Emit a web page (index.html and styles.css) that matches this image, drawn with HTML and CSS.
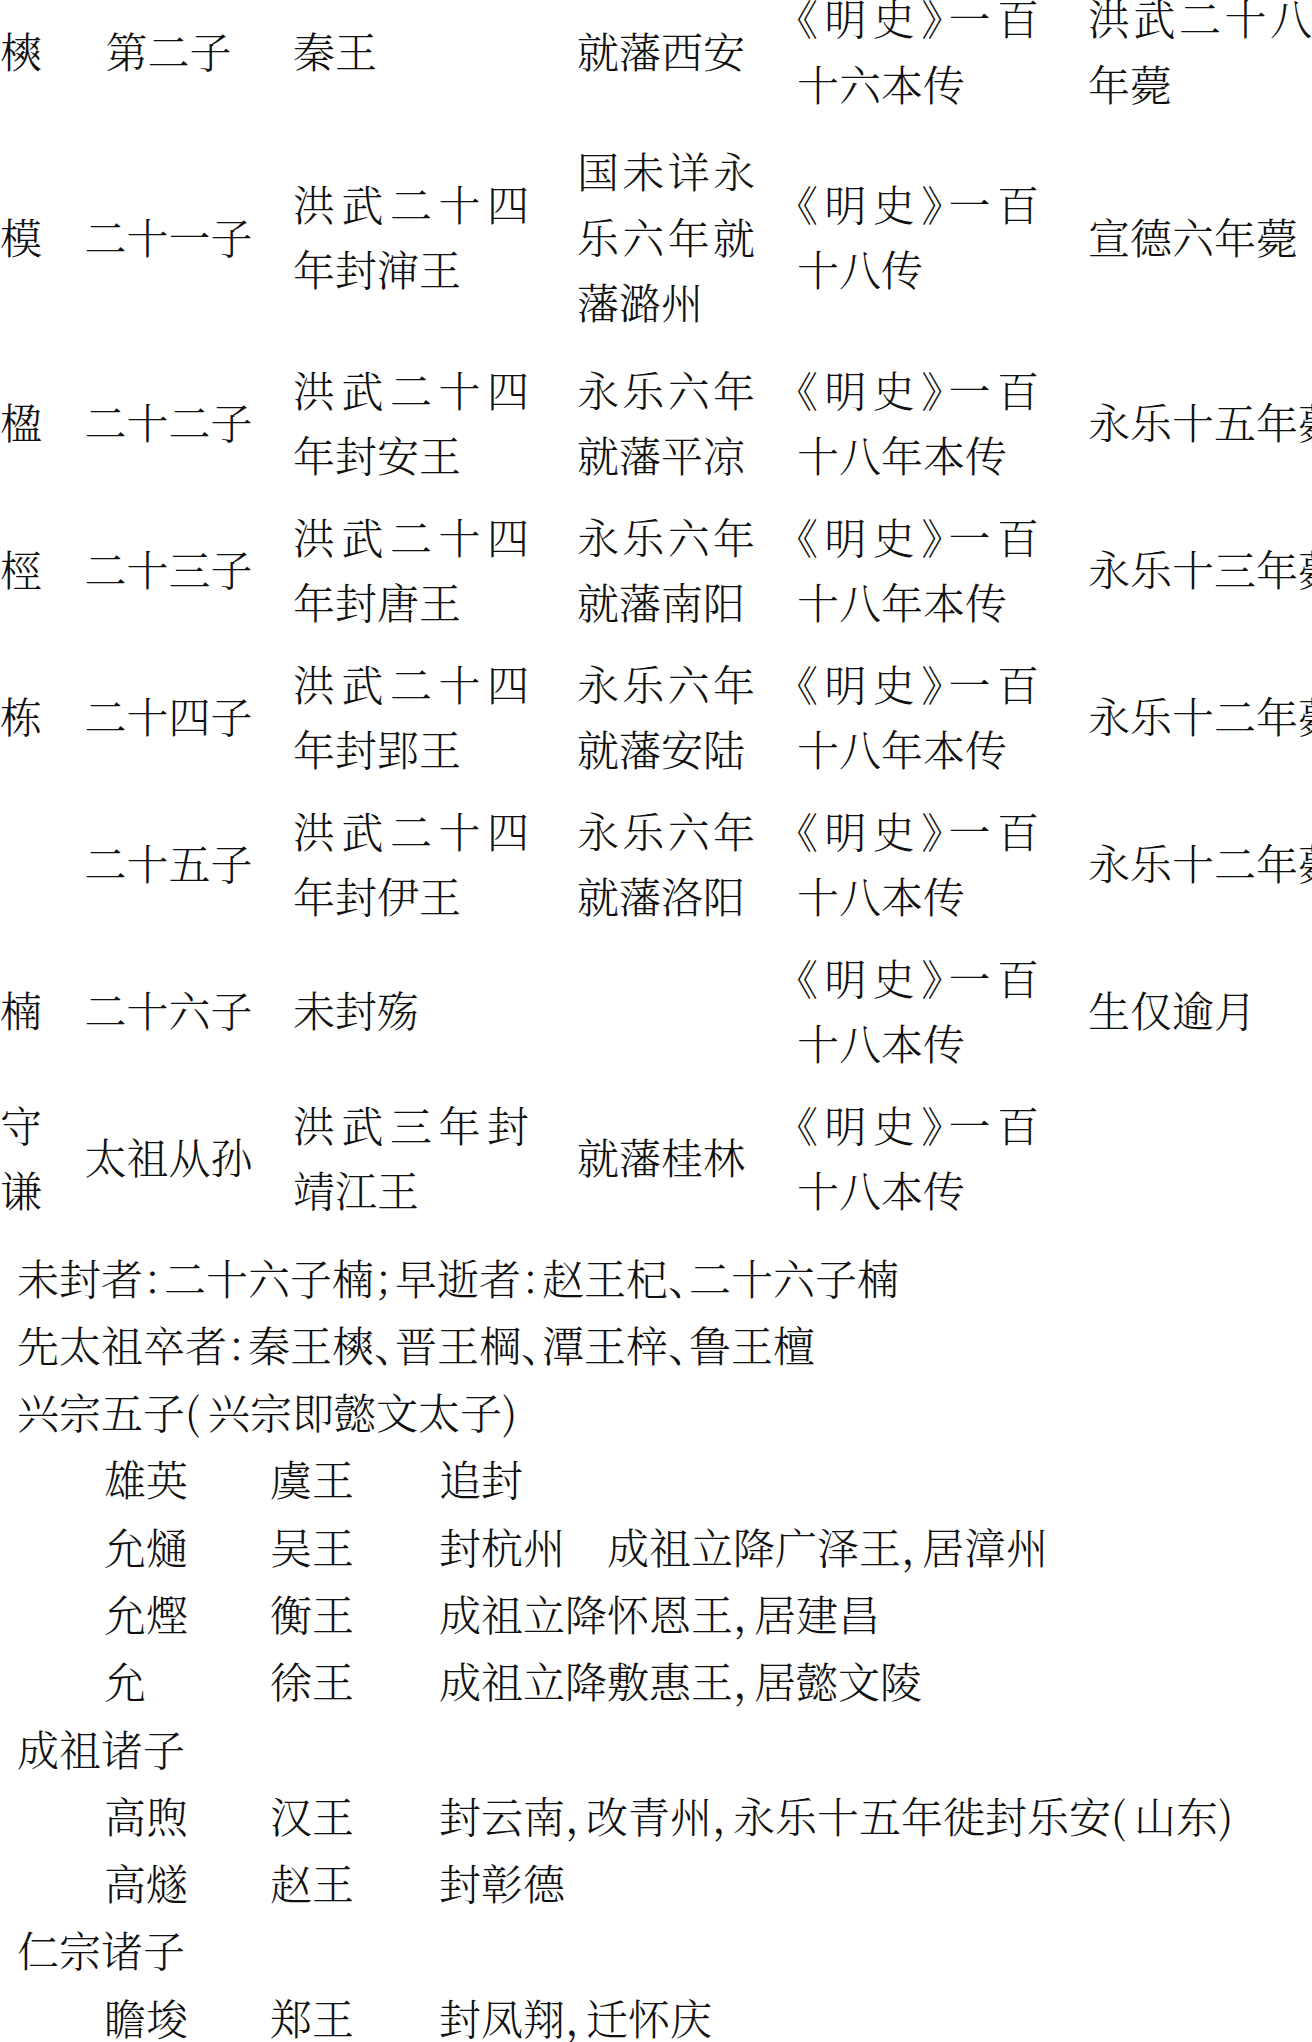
FILE: index.html
```html
<!DOCTYPE html>
<html lang="zh-CN">
<head>
<meta charset="utf-8">
<title>明代诸王表</title>
<link rel="stylesheet" href="styles.css">
</head>
<body>
<main class="page">
  <table class="roster">
    <colgroup>
      <col class="c-name"><col class="c-order"><col class="c-title"><col class="c-fief"><col class="c-src"><col class="c-death">
    </colgroup>
    <tbody>
      <tr>
        <td class="name">樉</td>
        <td class="order">第二子</td>
        <td class="title">秦王</td>
        <td class="fief">就藩西安</td>
        <td class="src"><div class="ln j">《明史》一百</div><div class="ln">十六本传</div></td>
        <td class="death"><div class="ln j">洪武二十八</div><div class="ln">年薨</div></td>
      </tr>
      <tr class="r3">
        <td class="name">模</td>
        <td class="order">二十一子</td>
        <td class="title"><div class="ln j">洪武二十四</div><div class="ln">年封渖王</div></td>
        <td class="fief"><div class="ln j">国未详永</div><div class="ln j">乐六年就</div><div class="ln">藩潞州</div></td>
        <td class="src"><div class="ln j">《明史》一百</div><div class="ln">十八传</div></td>
        <td class="death">宣德六年薨</td>
      </tr>
      <tr>
        <td class="name">楹</td>
        <td class="order">二十二子</td>
        <td class="title"><div class="ln j">洪武二十四</div><div class="ln">年封安王</div></td>
        <td class="fief"><div class="ln j">永乐六年</div><div class="ln">就藩平凉</div></td>
        <td class="src"><div class="ln j">《明史》一百</div><div class="ln">十八年本传</div></td>
        <td class="death">永乐十五年薨</td>
      </tr>
      <tr>
        <td class="name">桱</td>
        <td class="order">二十三子</td>
        <td class="title"><div class="ln j">洪武二十四</div><div class="ln">年封唐王</div></td>
        <td class="fief"><div class="ln j">永乐六年</div><div class="ln">就藩南阳</div></td>
        <td class="src"><div class="ln j">《明史》一百</div><div class="ln">十八年本传</div></td>
        <td class="death">永乐十三年薨</td>
      </tr>
      <tr>
        <td class="name">栋</td>
        <td class="order">二十四子</td>
        <td class="title"><div class="ln j">洪武二十四</div><div class="ln">年封郢王</div></td>
        <td class="fief"><div class="ln j">永乐六年</div><div class="ln">就藩安陆</div></td>
        <td class="src"><div class="ln j">《明史》一百</div><div class="ln">十八年本传</div></td>
        <td class="death">永乐十二年薨</td>
      </tr>
      <tr>
        <td class="name"></td>
        <td class="order">二十五子</td>
        <td class="title"><div class="ln j">洪武二十四</div><div class="ln">年封伊王</div></td>
        <td class="fief"><div class="ln j">永乐六年</div><div class="ln">就藩洛阳</div></td>
        <td class="src"><div class="ln j">《明史》一百</div><div class="ln">十八本传</div></td>
        <td class="death">永乐十二年薨</td>
      </tr>
      <tr>
        <td class="name">楠</td>
        <td class="order">二十六子</td>
        <td class="title">未封殇</td>
        <td class="fief"></td>
        <td class="src"><div class="ln j">《明史》一百</div><div class="ln">十八本传</div></td>
        <td class="death">生仅逾月</td>
      </tr>
      <tr>
        <td class="name">守谦</td>
        <td class="order">太祖从孙</td>
        <td class="title"><div class="ln j">洪武三年封</div><div class="ln">靖江王</div></td>
        <td class="fief">就藩桂林</td>
        <td class="src"><div class="ln j">《明史》一百</div><div class="ln">十八本传</div></td>
        <td class="death"></td>
      </tr>
    </tbody>
  </table>

  <section class="notes">
    <p class="line">未封者：二十六子楠；早逝者：赵王杞、二十六子楠</p>
    <p class="line">先太祖卒者：秦王樉、晋王棡、潭王梓、鲁王檀</p>
    <p class="line">兴宗五子<span class="paren">(</span>兴宗即懿文太子<span class="paren-r">)</span></p>
    <div class="sub"><span>雄英</span><span>虞王</span><span>追封</span></div>
    <div class="sub"><span>允熥</span><span>吴王</span><span>封杭州<span class="gap">成祖立降广泽王，居漳州</span></span></div>
    <div class="sub"><span>允熞</span><span>衡王</span><span>成祖立降怀恩王，居建昌</span></div>
    <div class="sub"><span>允</span><span>徐王</span><span>成祖立降敷惠王，居懿文陵</span></div>
    <p class="line">成祖诸子</p>
    <div class="sub"><span>高煦</span><span>汉王</span><span>封云南，改青州，永乐十五年徙封乐安<span class="paren">(</span>山东<span class="paren-r">)</span></span></div>
    <div class="sub"><span>高燧</span><span>赵王</span><span>封彰德</span></div>
    <p class="line">仁宗诸子</p>
    <div class="sub"><span>瞻埈</span><span>郑王</span><span>封凤翔，迁怀庆</span></div>
  </section>
</main>
</body>
</html>
```

FILE: styles.css
```css
html, body {
  margin: 0;
  padding: 0;
  background: #ffffff;
}

body {
  width: 1312px;
  overflow: hidden;
  color: #111111;
  font-family: "Noto Serif CJK SC", "Noto Sans CJK SC", "Noto Sans CJK JP", serif;
  font-weight: 300;
  font-size: 42px;
  font-feature-settings: "halt";
}

.page {
  display: flex;
  flex-direction: column;
}

.roster {
  margin-top: -23px;
  border-collapse: collapse;
  border-spacing: 0;
  table-layout: fixed;
  width: 1312px;
}

.c-name { width: 44px; }
.c-order { width: 249px; }
.c-title { width: 284px; }
.c-fief { width: 220px; }
.c-src { width: 291px; }
.c-death { width: 224px; }

.roster td {
  padding: 8px 0;
  vertical-align: middle;
  line-height: 65.5px;
  white-space: nowrap;
  overflow: visible;
}

.roster tr.r3 td {
  padding: 14px 0;
}

.roster td.name {
  white-space: normal;
  text-align: left;
}

.roster td.order {
  text-align: center;
}

.ln {
  white-space: nowrap;
}

.ln.j {
  text-align: justify;
  text-align-last: justify;
  text-justify: inter-character;
}

.title .ln.j { width: 236px; }
.fief .ln.j { width: 178px; }
.src .ln.j { width: 242px; }
.death .ln.j { width: 224px; }

.notes {
  margin-top: 13px;
  padding-left: 17px;
  display: flex;
  flex-direction: column;
}

.line {
  margin: 0;
  line-height: 67.3px;
  white-space: nowrap;
}

.sub {
  display: grid;
  grid-template-columns: 166px 169px auto;
  margin-left: 87px;
  line-height: 67.3px;
  white-space: nowrap;
}

.gap {
  margin-left: 1em;
}

.paren {
  display: inline-block;
  width: 0.55em;
  text-align: left;
}

.paren-r {
  display: inline-block;
  width: 0.45em;
  text-align: left;
}
```
